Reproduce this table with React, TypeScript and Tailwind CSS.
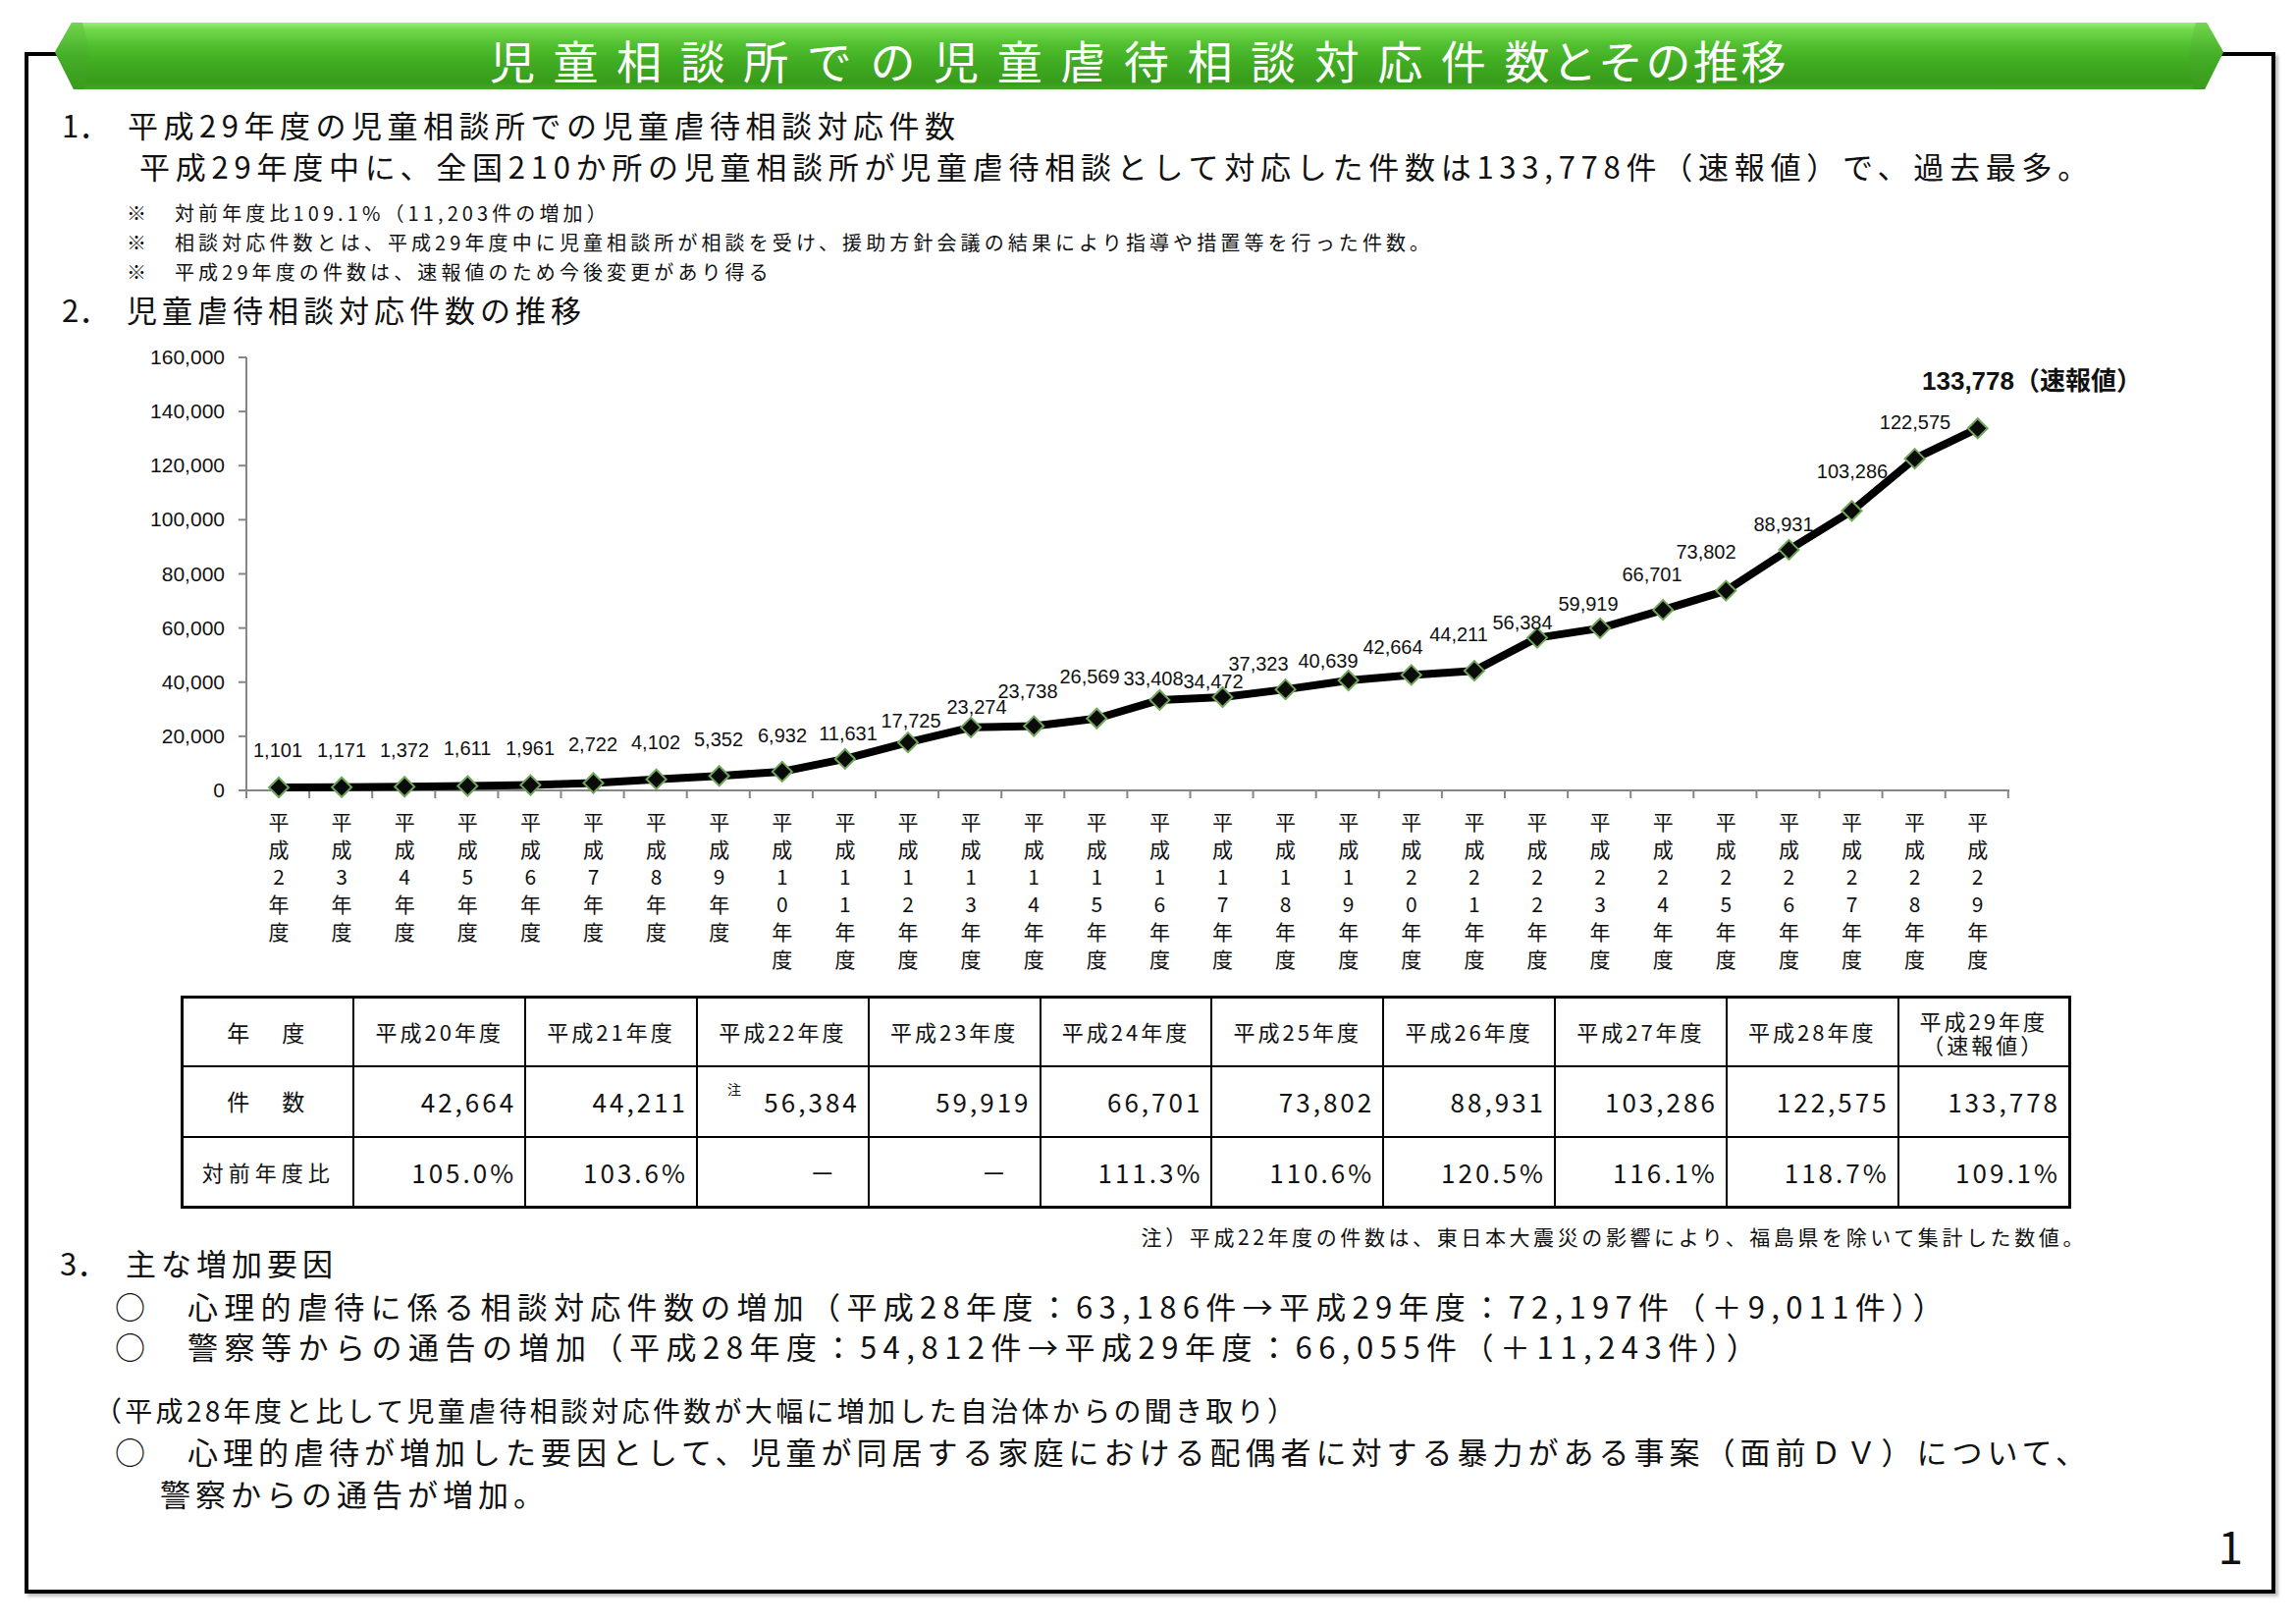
import React from 'react';

const JP = "font-['Noto_Sans_CJK_JP','Noto_Sans',sans-serif]";
const JP_FONT = "'Noto Sans CJK JP', 'Noto Sans', sans-serif";
const NUM_FONT = "'Liberation Sans', Arial, sans-serif";

const counts = [
  1101, 1171, 1372, 1611, 1961, 2722, 4102, 5352, 6932, 11631, 17725, 23274, 23738, 26569,
  33408, 34472, 37323, 40639, 42664, 44211, 56384, 59919, 66701, 73802, 88931, 103286, 122575, 133778,
];

// label centres: the labels in the original chart were dragged by hand
const labelAt: [number, number][] = [
  [283, 764], [348, 764], [412, 764], [476, 762], [540, 762], [604, 758], [668, 756], [732, 753],
  [797, 749], [864, 747], [928, 734], [995, 720], [1047, 704], [1110, 689], [1175, 691], [1236, 694],
  [1282, 676], [1353, 673], [1419, 659], [1486, 646], [1551, 634], [1618, 615], [1683, 585], [1738, 562],
  [1817, 534], [1887, 480], [1951, 430],
];

const X0 = 284;
const DX = 64.1;
const Y0 = 805;
const PLOT_H = 441;
const MAX = 160000;

const px = (i: number) => X0 + DX * i;
const py = (v: number) => Y0 - (v * PLOT_H) / MAX;

const TrendChart: React.FC = () => {
  const points = counts.map((v, i) => `${px(i)},${py(v)}`).join(' ');
  const yTicks = [0, 20000, 40000, 60000, 80000, 100000, 120000, 140000, 160000];

  return (
    <svg className="mt-[5px] block" width={2285} height={660} viewBox="29 340 2285 660">
      {/* axes */}
      <line x1={251} y1={364} x2={251} y2={Y0} stroke="#868686" strokeWidth={2} />
      <line x1={251} y1={Y0} x2={2047} y2={Y0} stroke="#868686" strokeWidth={2} />
      {yTicks.map((t) => (
        <g key={t}>
          <line x1={243} y1={py(t)} x2={251} y2={py(t)} stroke="#868686" strokeWidth={2} />
          <text x={229} y={py(t) + 7} textAnchor="end" fontFamily={NUM_FONT} fontSize={21} fill="#111">
            {t.toLocaleString('en-US')}
          </text>
        </g>
      ))}
      {Array.from({ length: 29 }, (_, k) => (
        <line key={k} x1={251 + k * DX} y1={Y0} x2={251 + k * DX} y2={Y0 + 8} stroke="#868686" strokeWidth={2} />
      ))}

      {/* year labels, one character per row */}
      {counts.map((_, i) => {
        const chars = ['平', '成', ...String(i + 2).split(''), '年', '度'];
        return (
          <g key={i}>
            {chars.map((c, r) => (
              <text
                key={r}
                x={px(i)}
                y={845 + r * 28}
                textAnchor="middle"
                fontFamily={JP_FONT}
                fontSize={21}
                fill="#111"
              >
                {c}
              </text>
            ))}
          </g>
        );
      })}

      {/* series */}
      <polyline points={points} fill="none" stroke="#000" strokeWidth={8} strokeLinejoin="round" />
      {counts.map((v, i) => {
        const x = px(i);
        const y = py(v);
        return (
          <path
            key={i}
            d={`M${x} ${y - 10} L${x + 10} ${y} L${x} ${y + 10} L${x - 10} ${y} Z`}
            fill="#0b0b0b"
            stroke="#6fa85a"
            strokeWidth={2}
          />
        );
      })}

      {labelAt.map(([x, y], i) => (
        <text key={i} x={x} y={y + 7} textAnchor="middle" fontFamily={NUM_FONT} fontSize={20} fill="#111">
          {counts[i].toLocaleString('en-US')}
        </text>
      ))}
      <text x={2070} y={397} textAnchor="middle" fontSize={26} fontWeight={700} fill="#111">
        <tspan fontFamily={NUM_FONT}>133,778</tspan>
        <tspan fontFamily={JP_FONT}>（速報値）</tspan>
      </text>
    </svg>
  );
};

const tableYears = ['平成20年度', '平成21年度', '平成22年度', '平成23年度', '平成24年度', '平成25年度', '平成26年度', '平成27年度', '平成28年度'];
const tableCounts = ['42,664', '44,211', '56,384', '59,919', '66,701', '73,802', '88,931', '103,286', '122,575', '133,778'];
const tableRates = ['105.0%', '103.6%', '－', '－', '111.3%', '110.6%', '120.5%', '116.1%', '118.7%', '109.1%'];

const cell = 'border-2 border-black p-0';

const SummaryTable: React.FC = () => (
  <table className="ml-[155px] mt-[14px] w-[1926px] table-fixed border-collapse border-[3px] border-black">
    <tbody>
      <tr className="h-[70px]">
        <td className={`${cell} text-center text-[23px] tracking-[5px]`}>年　度</td>
        {tableYears.map((y) => (
          <td key={y} className={`${cell} text-center text-[22px] tracking-[3px]`}>
            {y}
          </td>
        ))}
        <td className={`${cell} text-center text-[22px] leading-[24px] tracking-[3px]`}>
          平成29年度
          <br />
          （速報値）
        </td>
      </tr>
      <tr className="h-[72px]">
        <td className={`${cell} text-center text-[23px] tracking-[5px]`}>件　数</td>
        {tableCounts.map((c, i) => (
          <td key={i} className={`${cell} relative pr-[8px] text-right text-[26px] tracking-[3px]`}>
            {i === 2 && <span className="absolute left-[30px] top-[12px] text-[14px] tracking-normal">注</span>}
            {c}
          </td>
        ))}
      </tr>
      <tr className="h-[72px]">
        <td className={`${cell} text-center text-[22px] tracking-[5px]`}>対前年度比</td>
        {tableRates.map((r, i) => (
          <td
            key={i}
            className={`${cell} text-right text-[26px] tracking-[3px] ${r === '－' ? 'pr-[30px]' : 'pr-[8px]'}`}
          >
            {r}
          </td>
        ))}
      </tr>
    </tbody>
  </table>
);

const Banner: React.FC = () => (
  <div className="absolute left-[27px] top-[-34px] h-[68px] w-[2209px]">
    <svg className="absolute inset-0" width={2209} height={68} viewBox="0 0 2209 68">
      <defs>
        <linearGradient id="bannerFill" x1="0" y1="0" x2="0" y2="1">
          <stop offset="0" stopColor="#9eee7a" />
          <stop offset="0.1" stopColor="#72d94c" />
          <stop offset="0.35" stopColor="#4fbe2e" />
          <stop offset="0.6" stopColor="#40ac22" />
          <stop offset="0.9" stopColor="#389b1b" />
          <stop offset="1" stopColor="#48a62c" />
        </linearGradient>
        <linearGradient id="capFill" x1="0" y1="0" x2="0" y2="1">
          <stop offset="0" stopColor="#6fd24c" />
          <stop offset="0.5" stopColor="#45ae27" />
          <stop offset="1" stopColor="#3a9a1e" />
        </linearGradient>
      </defs>
      <polygon points="0,30 17,0 2192,0 2209,30 2190,68 19,68" fill="url(#bannerFill)" />
      <polygon points="0,30 17,0 28,0 36,30 30,68 19,68" fill="url(#capFill)" opacity={0.85} />
      <polygon points="2209,30 2192,0 2181,0 2173,30 2179,68 2190,68" fill="url(#capFill)" opacity={0.85} />
    </svg>
    <div className="relative flex h-full items-center justify-center pt-[5px] text-[46px] leading-none text-white">
      <span className="tracking-[18.6px]">児童相談所での児童虐待相談対応件</span>
      <span className="tracking-[2.5px]">数とその推移</span>
    </div>
  </div>
);

export default function App() {
  return (
    <div className="h-[1654px] w-[2339px] bg-white pl-[25px] pt-[53px] text-[#111]">
      <div
        className={`relative h-[1570px] w-[2293px] border-4 border-black shadow-[3px_3px_3px_rgba(0,0,0,0.25)] ${JP}`}
      >
        <Banner />

        <div className="flex flex-col">
          <div className="mt-[50px] flex h-[40px] items-center pl-[34px] text-[31px] tracking-[5.5px]">
            <span className="w-[67px] tracking-normal">1．</span>
            <span>平成29年度の児童相談所での児童虐待相談対応件数</span>
          </div>
          <div className="mt-[2px] flex h-[40px] items-center pl-[113px] text-[31px] tracking-[5.75px]">
            平成29年度中に、全国210か所の児童相談所が児童虐待相談として対応した件数は133,778件（速報値）で、過去最多。
          </div>

          <div className="mt-[13px] flex h-[30px] items-center pl-[100px] text-[20px] tracking-[4.1px]">
            <span className="w-[49px] tracking-normal">※</span>
            <span>対前年度比109.1%（11,203件の増加）</span>
          </div>
          <div className="flex h-[30px] items-center pl-[100px] text-[20px] tracking-[4.1px]">
            <span className="w-[49px] tracking-normal">※</span>
            <span>相談対応件数とは、平成29年度中に児童相談所が相談を受け、援助方針会議の結果により指導や措置等を行った件数。</span>
          </div>
          <div className="flex h-[30px] items-center pl-[100px] text-[20px] tracking-[4.1px]">
            <span className="w-[49px] tracking-normal">※</span>
            <span>平成29年度の件数は、速報値のため今後変更があり得る</span>
          </div>

          <div className="mt-[3px] flex h-[40px] items-center pl-[34px] text-[31px] tracking-[5px]">
            <span className="w-[66px] tracking-normal">2．</span>
            <span>児童虐待相談対応件数の推移</span>
          </div>

          <TrendChart />

          <SummaryTable />

          <div className="mt-[16px] h-[24px] pr-[188px] text-right text-[21px] leading-[24px] tracking-[3.6px]">
            注）平成22年度の件数は、東日本大震災の影響により、福島県を除いて集計した数値。
          </div>

          <div className="flex h-[30px] items-center pl-[32px] text-[31px] tracking-[5px]">
            <span className="w-[67px] tracking-normal">3．</span>
            <span>主な増加要因</span>
          </div>
          <div className="mt-[9px] flex h-[40px] items-center pl-[88px] text-[31px] tracking-[6.3px]">
            <span className="w-[74px] tracking-normal">○</span>
            <span>心理的虐待に係る相談対応件数の増加（平成28年度：63,186件→平成29年度：72,197件（＋9,011件））</span>
          </div>
          <div className="mt-[1px] flex h-[40px] items-center pl-[88px] text-[31px] tracking-[6.5px]">
            <span className="w-[74px] tracking-normal">○</span>
            <span>警察等からの通告の増加（平成28年度：54,812件→平成29年度：66,055件（＋11,243件））</span>
          </div>

          <div className="mt-[25px] flex h-[40px] items-center pl-[67px] text-[28px] tracking-[3.3px]">
            （平成28年度と比して児童虐待相談対応件数が大幅に増加した自治体からの聞き取り）
          </div>
          <div className="mt-[2px] flex h-[40px] items-center pl-[88px] text-[31px] tracking-[5px]">
            <span className="w-[74px] tracking-normal">○</span>
            <span>心理的虐待が増加した要因として、児童が同居する家庭における配偶者に対する暴力がある事案（面前ＤＶ）について、</span>
          </div>
          <div className="mt-[3px] flex h-[40px] items-center pl-[134px] text-[31px] tracking-[5px]">
            警察からの通告が増加。
          </div>

          <div className="mt-[7px] h-[50px] pr-[29px] text-right text-[46px] leading-[50px]">1</div>
        </div>
      </div>
    </div>
  );
}
